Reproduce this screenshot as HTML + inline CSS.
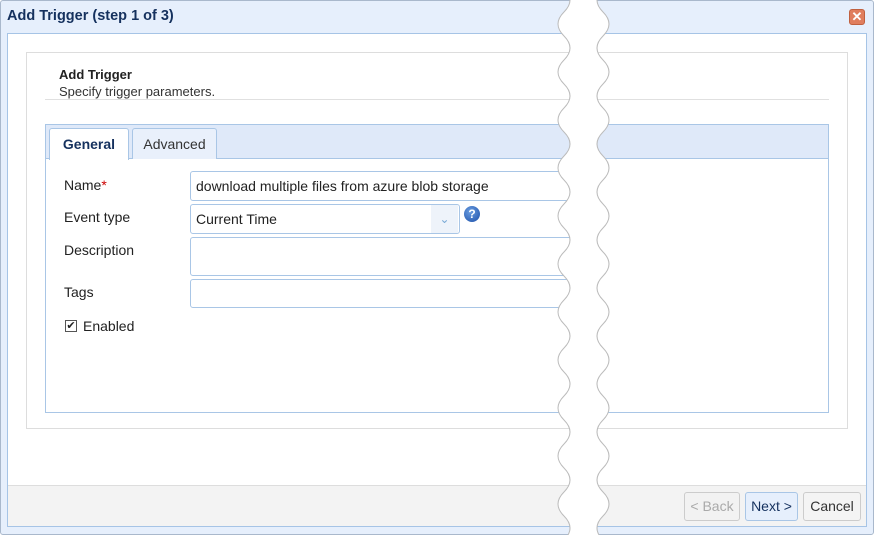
<!DOCTYPE html>
<html><head><style>
*{margin:0;padding:0;box-sizing:border-box}
body{width:874px;height:535px;background:#fff;font-family:"Liberation Sans",Arial,sans-serif;font-size:14px;color:#222;position:relative;overflow:hidden}
.abs{position:absolute}
.frame{left:0;top:0;width:874px;height:535px;background:#e6effc;border:1px solid #a9b8cc;border-radius:3px}
.title{left:7px;top:8px;font-weight:bold;font-size:14.5px;color:#15315e}
.body{left:7px;top:33px;width:860px;height:494px;background:#fff;border:1px solid #a6c4e6}
.footer{left:8px;top:485px;width:858px;height:41px;background:#f3f3f3;border-top:1px solid #ddd}
.panel{left:26px;top:52px;width:822px;height:377px;border:1px solid #ddd}
.sep{left:45px;top:99px;width:784px;height:1px;background:#e0e0e0}
.tabs{left:45px;top:124px;width:784px;height:289px;border:1px solid #a9c6e6}
.strip{left:46px;top:125px;width:782px;height:34px;background:#dfe9f9;border-bottom:1px solid #a9c6e6}
.tab{top:128px;height:31px;border:1px solid #a9c6e6;border-bottom:none;border-radius:3px 3px 0 0;font-size:14px;text-align:center;line-height:30px}
.lbl{left:64px;font-size:14px}
.inp{left:190px;border:1px solid #a9c6e6;border-radius:3px;background:#fff;padding-left:5px;font-size:14px}
.btn{top:492px;height:29px;border:1px solid #ccc;border-radius:3px;background:#f4f4f4;font-size:14px;text-align:center;line-height:27px}
</style></head><body>
<div class="abs frame"></div>
<div class="abs title">Add Trigger (step 1 of 3)</div>
<div class="abs" style="left:849px;top:9px;width:16px;height:16px;background:#e07e5e;border:1px solid #c0603f;border-radius:3px;color:#fff;font-size:13px;font-weight:bold;line-height:14px;text-align:center">✕</div>
<div class="abs body"></div>
<div class="abs footer"></div>
<div class="abs panel"></div>
<div class="abs" style="left:59px;top:67px;font-weight:bold;font-size:13px">Add Trigger</div>
<div class="abs" style="left:59px;top:84px;font-size:13px;color:#333">Specify trigger parameters.</div>
<div class="abs sep"></div>
<div class="abs tabs"></div>
<div class="abs strip"></div>
<div class="abs tab" style="left:49px;width:80px;background:#fff;font-weight:bold;color:#15315e;height:32px">General</div>
<div class="abs tab" style="left:132px;width:85px;background:#e9f0fb;color:#333">Advanced</div>
<div class="abs lbl" style="top:177px">Name<span style="color:#c00">*</span></div>
<div class="abs lbl" style="top:209px">Event type</div>
<div class="abs lbl" style="top:242px">Description</div>
<div class="abs lbl" style="top:284px">Tags</div>
<div class="abs inp" style="top:171px;width:400px;height:30px;line-height:28px">download multiple files from azure blob storage</div>
<div class="abs inp" style="top:204px;width:270px;height:30px;line-height:28px">Current Time</div>
<div class="abs" style="left:431px;top:205px;width:27px;height:28px;background:#eef3fa;color:#7aaad6;text-align:center;line-height:28px;font-size:12px">&#8964;</div>
<div class="abs" style="left:464px;top:206px;width:16px;height:16px;border-radius:50%;background:radial-gradient(circle at 40% 35%,#6a9de0,#1c4fa8);color:#fff;font-weight:bold;font-size:12px;text-align:center;line-height:16px">?</div>
<div class="abs inp" style="top:237px;width:400px;height:39px"></div>
<div class="abs inp" style="top:279px;width:400px;height:29px"></div>
<div class="abs" style="left:65px;top:320px;width:12px;height:12px;border:1px solid #555;background:#fff;font-size:11px;line-height:10px;text-align:center">✔</div>
<div class="abs" style="left:83px;top:318px">Enabled</div>
<svg class="abs" style="left:540px;top:0" width="90" height="535">
<path d="M24,-12 Q36,0 24,12 T24,36 T24,60 T24,84 T24,108 T24,132 T24,156 T24,180 T24,204 T24,228 T24,252 T24,276 T24,300 T24,324 T24,348 T24,372 T24,396 T24,420 T24,444 T24,468 T24,492 T24,516 T24,540 L63,540 Q51,528 63,516 T63,492 T63,468 T63,444 T63,420 T63,396 T63,372 T63,348 T63,324 T63,300 T63,276 T63,252 T63,228 T63,204 T63,180 T63,156 T63,132 T63,108 T63,84 T63,60 T63,36 T63,12 T63,-12 Z" fill="#fff" stroke="#bbb" stroke-width="1"/>
</svg>
<div class="abs btn" style="left:684px;width:56px;color:#aaa;background:#f2f2f2">&lt; Back</div>
<div class="abs btn" style="left:745px;width:53px;background:#e6effc;border-color:#a9c6e6;color:#15315e">Next &gt;</div>
<div class="abs btn" style="left:803px;width:58px;color:#333">Cancel</div>
</body></html>
